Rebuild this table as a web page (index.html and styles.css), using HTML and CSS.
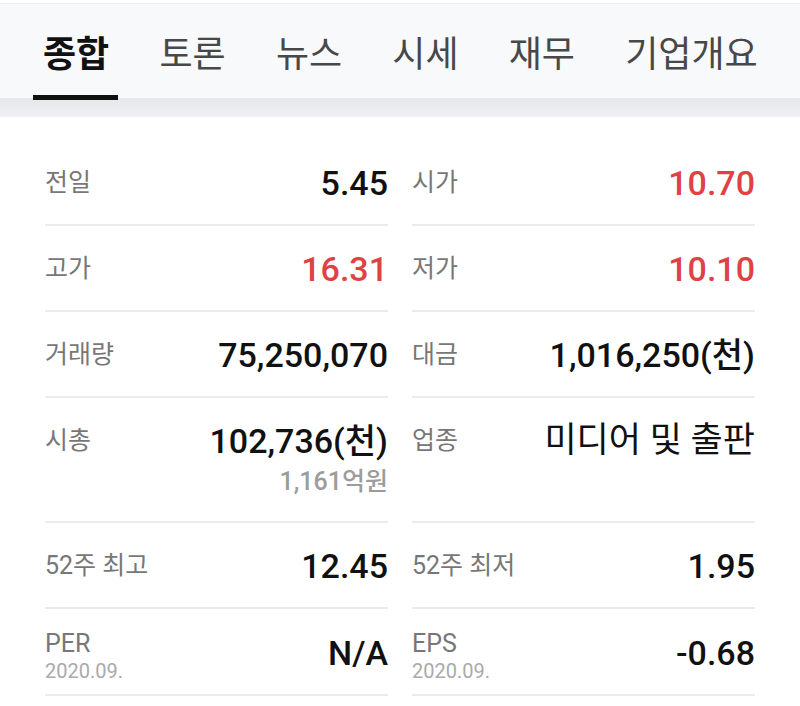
FILE: index.html
```html
<!DOCTYPE html>
<html lang="ko">
<head>
<meta charset="UTF-8">
<meta name="viewport" content="width=device-width, initial-scale=1.0">
<title>종합 시세</title>
<link rel="stylesheet" href="styles.css">
</head>
<body>

<nav class="tabs">
  <a class="tab active">종합</a>
  <a class="tab">토론</a>
  <a class="tab">뉴스</a>
  <a class="tab">시세</a>
  <a class="tab">재무</a>
  <a class="tab">기업개요</a>
</nav>
<div class="band"></div>

<div class="stats">
  <div class="item">
    <span class="label">전일</span>
    <span class="value">5.45</span>
  </div>
  <div class="item">
    <span class="label">시가</span>
    <span class="value up">10.70</span>
  </div>

  <div class="item">
    <span class="label">고가</span>
    <span class="value up">16.31</span>
  </div>
  <div class="item">
    <span class="label">저가</span>
    <span class="value up">10.10</span>
  </div>

  <div class="item">
    <span class="label">거래량</span>
    <span class="value">75,250,070</span>
  </div>
  <div class="item">
    <span class="label">대금</span>
    <span class="value">1,016,250(천)</span>
  </div>

  <div class="item">
    <span class="label">시총</span>
    <div class="value-wrap">
      <span class="value">102,736(천)</span>
      <span class="sub">1,161억원</span>
    </div>
  </div>
  <div class="item">
    <span class="label">업종</span>
    <span class="value text">미디어 및 출판</span>
  </div>

  <div class="item">
    <span class="label">52주 최고</span>
    <span class="value">12.45</span>
  </div>
  <div class="item">
    <span class="label">52주 최저</span>
    <span class="value">1.95</span>
  </div>

  <div class="item has-date">
    <div class="label-wrap">
      <span class="label">PER</span>
      <span class="date">2020.09.</span>
    </div>
    <span class="value">N/A</span>
  </div>
  <div class="item has-date">
    <div class="label-wrap">
      <span class="label">EPS</span>
      <span class="date">2020.09.</span>
    </div>
    <span class="value">-0.68</span>
  </div>
</div>

</body>
</html>
```

FILE: styles.css
```css
body {
  margin: 0;
  padding: 0;
  background: #fff;
  font-family: Roboto, "Noto Sans CJK KR", sans-serif;
  color: #111;
}
.tabs {
  display: flex;
  align-items: center;
  gap: 38.2px;
  height: 94px;
  margin-top: 3px;
  padding-left: 37px;
  background: #f8f9fa;
  border-top: 1px solid #eef0f2;
}
.tab {
  position: relative;
  padding: 0 6px;
  font-family: "Noto Sans CJK KR", sans-serif;
  font-size: 36px;
  line-height: 40px;
  color: #484848;
}
.tab.active {
  font-weight: 700;
  color: #111;
}
.tab.active::after {
  content: "";
  position: absolute;
  left: -4px;
  right: -3px;
  bottom: -29px;
  height: 5px;
  background: #111;
}
.band {
  height: 19px;
  background: linear-gradient(#e5e8eb, #eff1f3);
}
.stats {
  display: grid;
  grid-template-columns: 1fr 1fr;
  column-gap: 24px;
  padding: 23px 45px 0;
}
.item {
  display: flex;
  justify-content: space-between;
  align-items: flex-start;
  padding: 26px 0 24px;
  border-bottom: 2px solid #ebebeb;
}
.label {
  font-size: 25px;
  line-height: 34px;
  color: #777;
}
.value {
  font-size: 34px;
  line-height: 34px;
  font-weight: 500;
  color: #111;
}
.value.up {
  color: #de4242;
}
.value.text {
  font-weight: 400;
  font-size: 35px;
}
.value-wrap {
  display: flex;
  flex-direction: column;
  align-items: flex-end;
}
.sub {
  margin-top: 8px;
  font-size: 25px;
  line-height: 31px;
  font-weight: 500;
  color: #9c9c9c;
}
.item.has-date {
  padding: 21px 0 10px;
}
.label-wrap {
  display: flex;
  flex-direction: column;
}
.label-wrap .label {
  line-height: 28px;
}
.date {
  font-size: 20px;
  line-height: 26px;
  color: #aaa;
}
.item.has-date .value {
  margin-top: 6px;
}
```
